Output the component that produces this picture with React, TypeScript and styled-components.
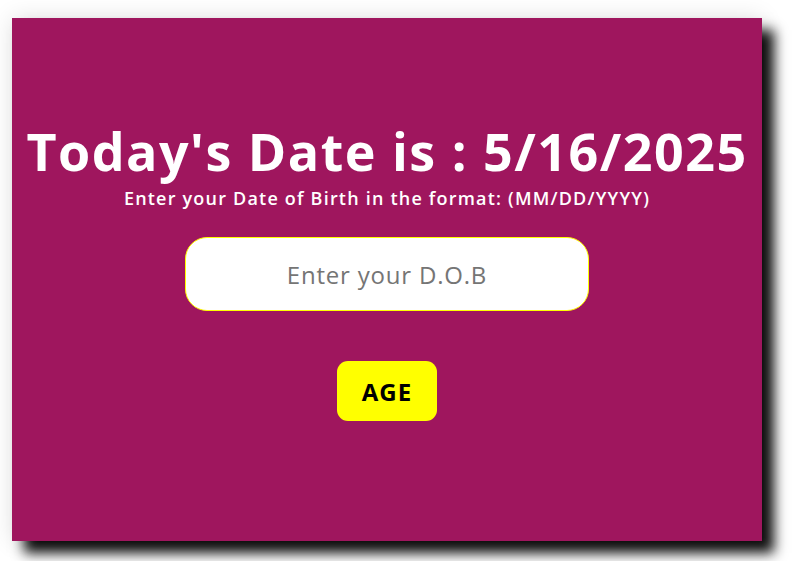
import React from "react";
import styled, { createGlobalStyle } from "styled-components";

const Global = createGlobalStyle`
  html, body { margin: 0; padding: 0; background: #ffffff; }
  body { font-family: "Comic Sans MS", "Open Sans", "DejaVu Sans", sans-serif; }
`;

const Page = styled.div`
  width: 807px;
  height: 561px;
  padding: 18px 0 0 12px;
  box-sizing: border-box;
`;

const Card = styled.main`
  width: 750px;
  height: 523px;
  background: #9f165e;
  box-shadow: 12px 12px 12px rgba(0, 0, 0, 0.95), 0 0 22px rgba(0, 0, 0, 0.12);
  display: flex;
  flex-direction: column;
  align-items: center;
  padding-top: 101px;
  box-sizing: border-box;
`;

const Title = styled.h1`
  margin: 0;
  color: #ffffff;
  font-family: "Comic Sans MS", "Open Sans", sans-serif;
  font-weight: 700;
  font-size: 52px;
  line-height: 64px;
  letter-spacing: 1.5px;
  white-space: nowrap;
`;

const Hint = styled.p`
  margin: 4px 0 0;
  color: #ffffff;
  font-family: "Comic Sans MS", "Open Sans", sans-serif;
  font-weight: 600;
  font-size: 18px;
  line-height: 22px;
  letter-spacing: 1.2px;
  white-space: nowrap;
`;

const DobInput = styled.input`
  margin-top: 28px;
  width: 404px;
  height: 74px;
  box-sizing: border-box;
  border: 1px solid #ffff00;
  border-radius: 22px;
  background: #ffffff;
  text-align: center;
  font-family: "Comic Sans MS", "Open Sans", sans-serif;
  font-size: 24px;
  letter-spacing: 0.8px;
  color: #333;
  outline: none;
  &::placeholder { color: #757575; }
`;

const AgeButton = styled.button`
  margin-top: 50px;
  width: 100px;
  height: 60px;
  border: none;
  border-radius: 11px;
  background: #ffff00;
  color: #000000;
  font-family: "Comic Sans MS", "Open Sans", sans-serif;
  font-weight: 700;
  font-size: 24px;
  letter-spacing: 1px;
  cursor: pointer;
`;

export default function App() {
  return (
    <>
      <Global />
      <Page>
        <Card>
          <Title>Today's Date is : 5/16/2025</Title>
          <Hint>Enter your Date of Birth in the format: (MM/DD/YYYY)</Hint>
          <DobInput type="text" placeholder="Enter your D.O.B" />
          <AgeButton>AGE</AgeButton>
        </Card>
      </Page>
    </>
  );
}
